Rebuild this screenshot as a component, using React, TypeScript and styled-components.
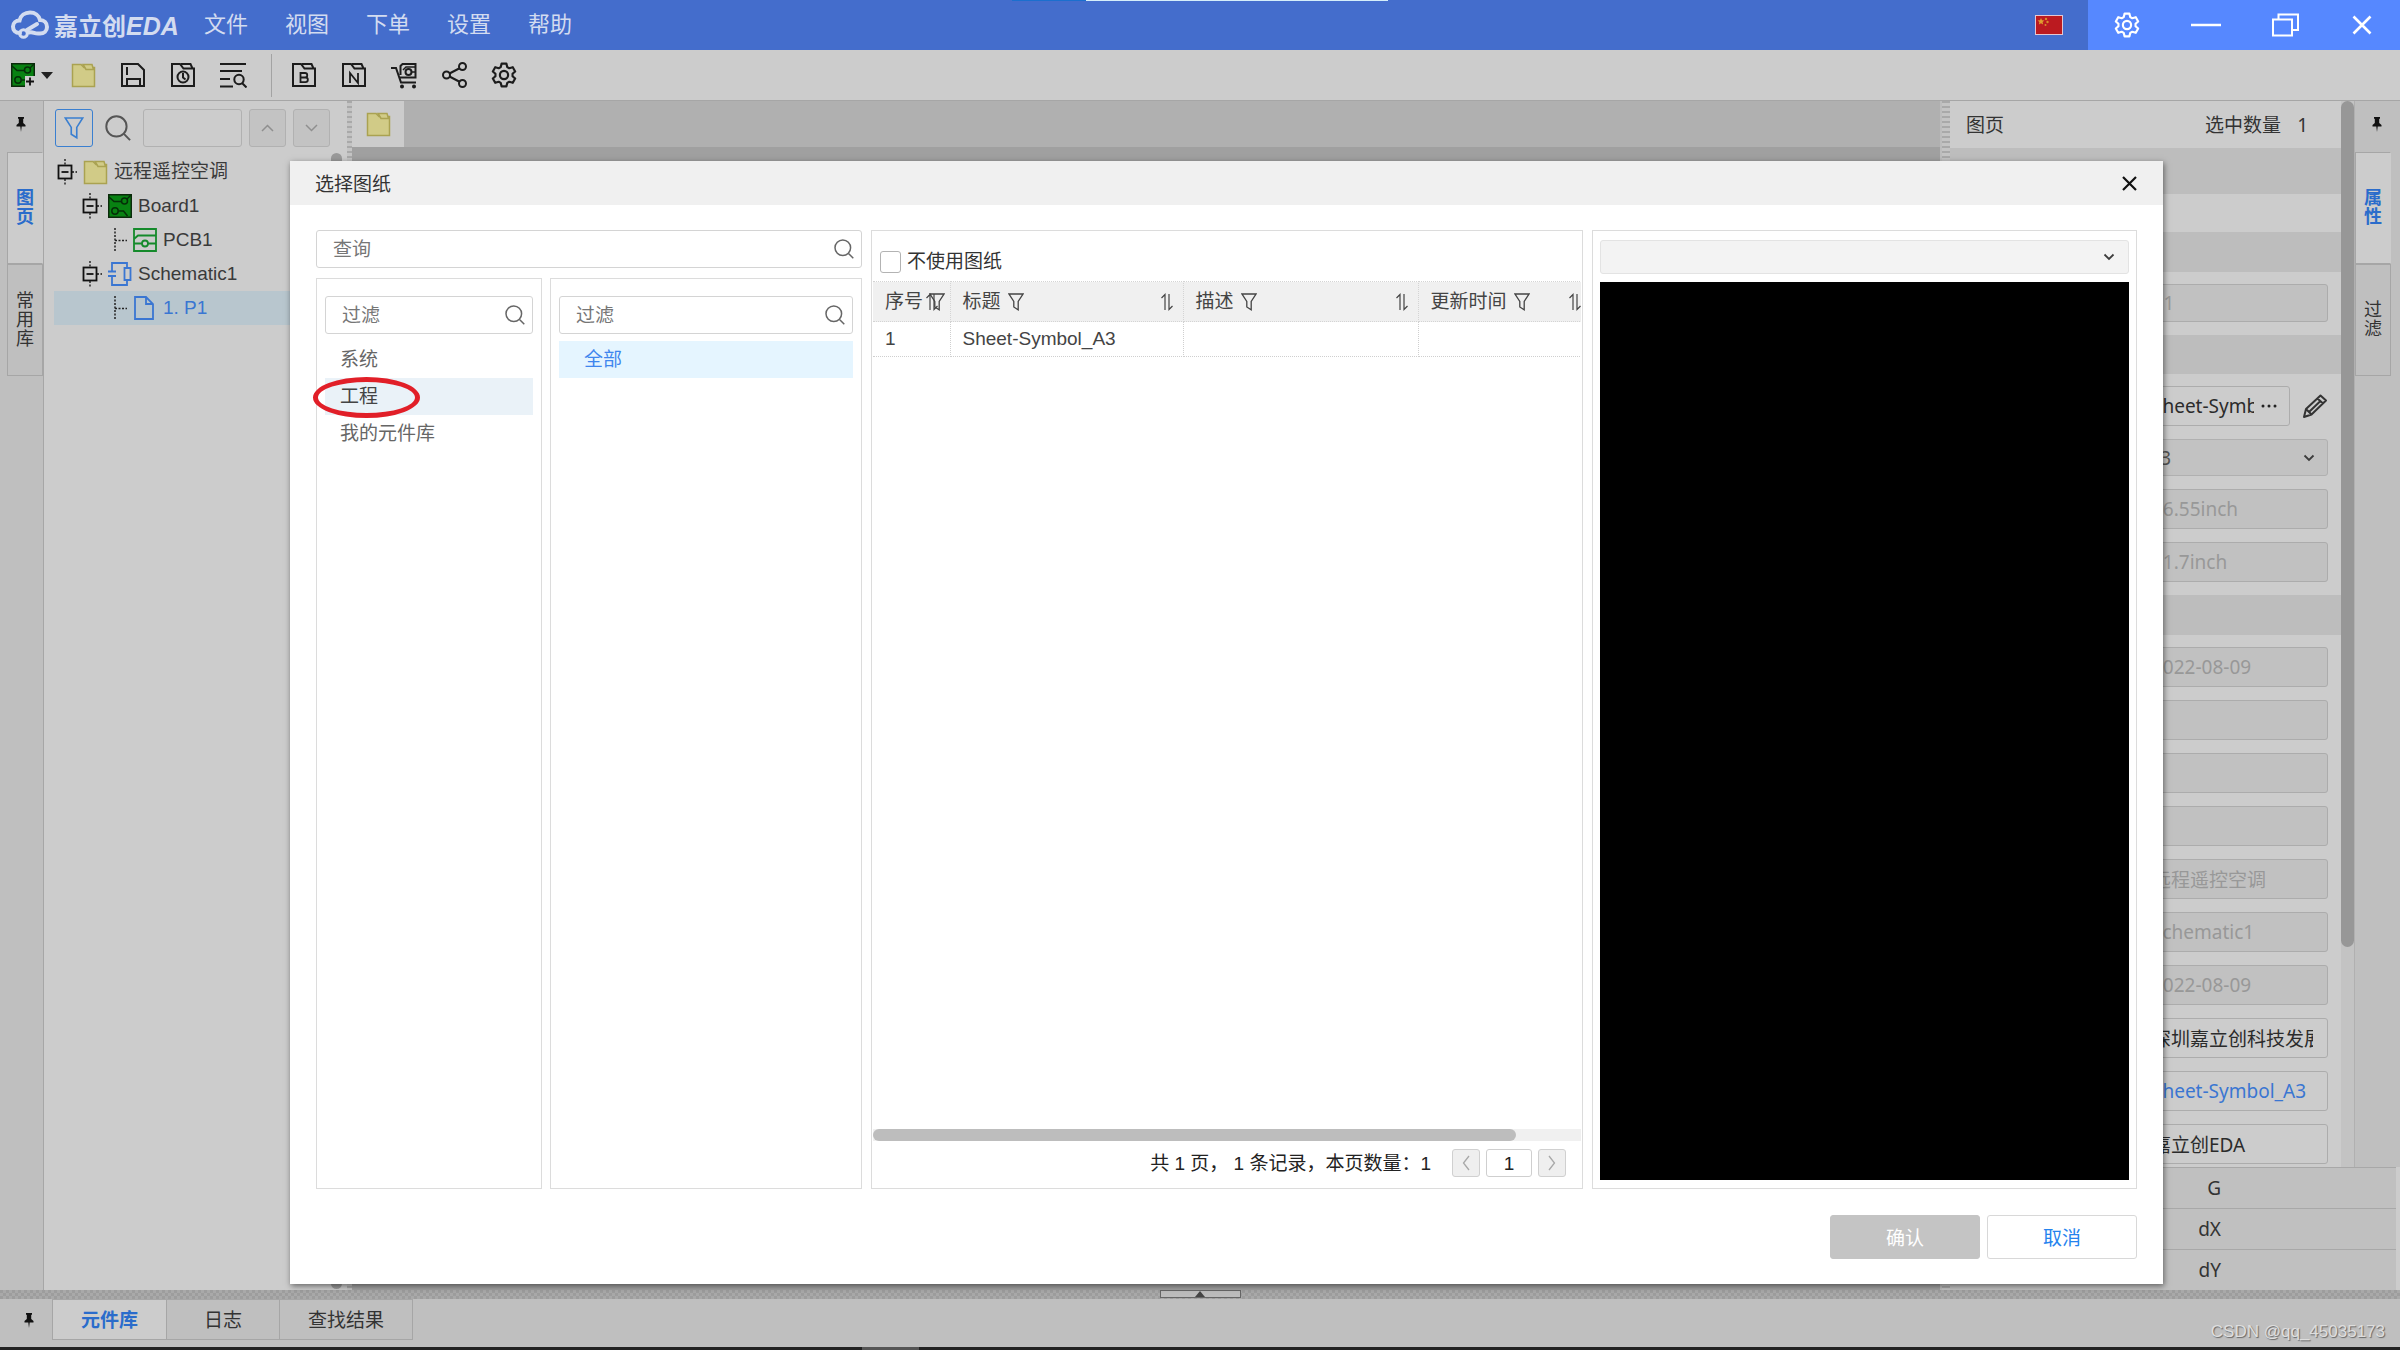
import React from "react";
import styled, { createGlobalStyle, css } from "styled-components";

const sans = `"Liberation Sans", "Noto Sans CJK SC", sans-serif`;
const ui = `"Noto Sans", "Noto Sans CJK SC", sans-serif`;

const c = {
  bar: "#446dcc",
  barBright: "#5688ff",
  base: "#cccccc",
  strip: "#bfbfbf",
  line: "#a6a6a6",
  ink: "#333333",
  blue: "#2a6ccb",
  paleBorder: "#dcdcdc",
};

const GlobalStyle = createGlobalStyle`
  *, *::before, *::after { box-sizing: border-box; }
  body { margin: 0; background: #222; color: ${c.ink}; font-family: ${sans}; font-size: 19px; line-height: 24px; }
  button, input, select { font: inherit; color: inherit; margin: 0; }
  button { padding: 0; border: 0; background: none; }
  input, select { min-width: 0; }
  svg { display: block; flex: none; }
`;

const Screen = styled.div`
  height: 100vh;
  display: flex;
  flex-direction: column;
  overflow: hidden;
  position: relative;
  background: ${c.base};
`;

/* Title bar */
const TitleBar = styled.header`
  flex: none;
  height: 50px;
  display: flex;
  align-items: stretch;
  background: ${c.bar};
  color: #d3dcf0;
`;
const TopHint = styled.div`
  position: absolute;
  top: 0;
  left: 1012px;
  width: 376px;
  height: 1px;
  background: linear-gradient(90deg, #1b6fce 74px, #d5eefa 74px);
`;
const Brand = styled.div`
  display: flex;
  align-items: center;
  gap: 4px;
  padding-left: 10px;
  width: 182px;
  font-size: 24px;
  font-weight: 700;
  white-space: nowrap;
  em { font-family: "Liberation Sans", sans-serif; font-size: 25px; }
`;
const BrandText = styled.span`
  font-family: "Noto Sans CJK SC", sans-serif;
`;
const Menu = styled.nav`
  display: flex;
  align-items: center;
  gap: 37px;
  padding-left: 22px;
  flex: 1;
  button { font-size: 22px; line-height: 30px; }
`;
const Flag = styled.div`
  display: flex;
  align-items: center;
  padding-right: 25px;
`;
const WindowControls = styled.div`
  display: flex;
  align-items: center;
  gap: 51px;
  width: 13%;
  padding-left: 26px;
  background: ${c.barBright};
  color: #fff;
`;

/* Tool bar */
const ToolBar = styled.div`
  flex: none;
  height: 51px;
  display: flex;
  align-items: center;
  gap: 24px;
  padding-left: 11px;
  border-bottom: 1px solid ${c.line};
  color: #1c1c1c;
`;
const BoardTool = styled.button`
  display: flex;
  align-items: center;
  gap: 6px;
  width: 36px;
`;
const ToolDivider = styled.span`
  align-self: stretch;
  width: 1px;
  margin: 4px -5px 3px 0;
  background: #a3a3a3;
`;

/* Work area */
const Work = styled.main`
  flex: 1;
  min-height: 0;
  display: flex;
`;
const Strip = styled.aside<{ $side: "left" | "right" }>`
  flex: none;
  width: ${(p) => (p.$side === "left" ? 44 : 46)}px;
  display: flex;
  flex-direction: column;
  align-items: stretch;
  background: ${c.strip};
  ${(p) =>
    p.$side === "left"
      ? css`border-right: 1px solid ${c.line}; padding-left: 7px;`
      : css`border-left: 1px solid #b0b0b0; padding-right: 9px;`}
`;
const PinButton = styled.button<{ $wide?: boolean }>`
  height: ${(p) => (p.$wide ? "auto" : "51px")};
  width: ${(p) => (p.$wide ? "52px" : "auto")};
  display: flex;
  align-items: center;
  justify-content: center;
  padding: ${(p) => (p.$wide ? "2px 0 0 6px" : "0 8px 4px 0")};
`;
const RightPin = styled(PinButton)`
  padding: 0 0 4px 8px;
`;
const SideTab = styled.button<{ $active?: boolean }>`
  height: 112px;
  width: 100%;
  display: flex;
  align-items: center;
  justify-content: center;
  border: 1px solid ${c.line};
  border-right-color: ${(p) => (p.$active ? c.base : c.line)};
  background: ${(p) => (p.$active ? c.base : c.strip)};
  color: ${(p) => (p.$active ? c.blue : c.ink)};
  font-weight: ${(p) => (p.$active ? 700 : 400)};
  font-size: 18px;
  line-height: 19px;
  span { width: 18px; }
`;

const TreePanel = styled.section`
  flex: none;
  width: 303px;
  display: flex;
  flex-direction: column;
  background: ${c.base};
`;
const TreeTools = styled.div`
  display: flex;
  align-items: center;
  padding: 8px 16px 0 11px;
  gap: 7px;
`;
const TreeBody = styled.div`
  flex: 1;
  display: flex;
  padding: 6px 5px 1px 10px;
`;
const TreeThumb = styled.div`
  flex: none;
  width: 11px;
  margin-left: -11px;
  border-radius: 6px;
  background: #999;
`;
const box = css`
  height: 38px;
  border: 1px solid #b1b1b1;
  border-radius: 3px;
  display: flex;
  align-items: center;
  justify-content: center;
`;
const FilterButton = styled.button`
  ${box}
  width: 38px;
  border-color: #3a7fd0;
  color: #3a7fd0;
`;
const FindButton = styled.button`
  width: 36px;
  display: flex;
  justify-content: center;
  color: #555;
`;
const FindInput = styled.input`
  ${box}
  width: 99px;
  background: transparent;
`;
const StepButton = styled.button`
  ${box}
  width: 37px;
  background: #c3c3c3;
  color: #8f8f8f;
`;
const Tree = styled.ul`
  list-style: none;
  flex: 1;
  margin: 0;
  padding: 2px 0 0;
`;
const TreeRow = styled.li<{ $level: number; $selected?: boolean }>`
  height: 34px;
  display: flex;
  align-items: center;
  gap: 6px;
  padding-left: ${(p) => 3 + p.$level * 25}px;
  white-space: nowrap;
  background: ${(p) => (p.$selected ? "#b8c6ce" : "transparent")};
  color: ${(p) => (p.$selected ? "#3a76d2" : "#3a3a3a")};
`;

const Gutter = styled.div`
  flex: none;
  width: 5px;
  background: repeating-linear-gradient(180deg, #a9a9a9 0 2px, #c4c4c4 2px 5px);
`;
const WideGutter = styled(Gutter)`
  width: 10px;
  border-left: 2px solid #bdbdbd;
`;
const Canvas = styled.section`
  flex: 1;
  background: #a0a0a0;
`;
const CanvasTabs = styled.div`
  height: 46px;
  background: #b0b0b0;
`;
const CanvasTab = styled.button`
  height: 46px;
  width: 52px;
  display: flex;
  align-items: center;
  justify-content: center;
  background: ${c.base};
`;

/* Properties */
const Props = styled.section`
  flex: none;
  width: 450px;
  display: flex;
  flex-direction: column;
`;
const PropsTop = styled.div`
  flex: 1;
  min-height: 0;
  display: flex;
`;
const PropsMain = styled.div`
  flex: 1;
  min-width: 0;
  font-family: ${ui};
`;
const PropsHead = styled.div`
  height: 47px;
  display: flex;
  align-items: center;
  padding: 0 33px 0 16px;
  gap: 16px;
  span:first-child { flex: 1; }
`;
const Band = styled.div<{ $h: number; $plain?: boolean }>`
  height: ${(p) => p.$h}px;
  background: ${(p) => (p.$plain ? c.base : "#bdbdbd")};
`;
const Fields = styled.div`
  display: flex;
  flex-direction: column;
  gap: 13px;
  padding: 12px 13px 13px 190px;
`;
const field = css`
  height: 40px;
  width: 100%;
  min-width: 0;
  border: 1px solid #acacac;
  border-radius: 3px;
  padding: 0 14px 0 11px;
`;
const Field = styled.input<{ $short?: boolean; $tone?: string }>`
  ${field}
  height: ${(p) => (p.$short ? 38 : 40)}px;
  background: ${c.base};
  color: ${(p) => p.$tone || "#2b2b2b"};
  &:disabled { background: #c1c1c1; color: #989898; }
`;
const FieldRow = styled.div`
  display: flex;
  align-items: center;
  gap: 12px;
`;
const PickBox = styled.div`
  ${field}
  display: flex;
  align-items: center;
  gap: 6px;
  padding-right: 11px;
  input { flex: 1; width: 0; border: 0; padding: 0; background: transparent; color: #2b2b2b; }
`;
const SelectWrap = styled.div<{ $light?: boolean }>`
  display: grid;
  align-items: center;
  color: #3c3c3c;
  > * { grid-area: 1 / 1; }
  > svg { justify-self: end; margin-right: ${(p) => (p.$light ? 14 : 13)}px; pointer-events: none; }
  select {
    appearance: none;
    width: 100%;
    height: ${(p) => (p.$light ? 34 : 37)}px;
    padding: 0 34px 0 7px;
    border: 1px solid ${(p) => (p.$light ? "#e3e3e3" : "#b0b0b0")};
    border-radius: 3px;
    background: ${(p) => (p.$light ? "#f3f3f3" : "#c2c2c2")};
    color: #555;
    opacity: 1;
  }
`;
const VTrack = styled.div`
  flex: none;
  width: 13px;
  background: #c3c3c3;
`;
const VThumb = styled.div`
  width: 13px;
  height: 79.4%;
  border-radius: 7px;
  background: #979797;
`;
const Coords = styled.dl`
  margin: 0;
  width: 446px;
  background: #c0c0c0;
  font-family: ${ui};
`;
const Coord = styled.div`
  height: 41px;
  display: flex;
  align-items: center;
  border-top: 1px solid #a8a8a8;
  dt { width: 271px; text-align: right; }
`;

/* Bottom bar */
const HSplit = styled.div`
  flex: none;
  height: 9px;
  display: flex;
  justify-content: center;
  background: repeating-conic-gradient(#a9a9a9 0 25%, #9d9d9d 0 50%) 0 0 / 6px 6px;
`;
const Collapse = styled.button`
  width: 81px;
  height: 8px;
  display: flex;
  align-items: center;
  justify-content: center;
  border: 1px solid #666;
  background: #bcbcbc;
  color: #444;
`;
const BottomBar = styled.footer`
  flex: none;
  height: 48px;
  display: flex;
  align-items: flex-start;
  background: ${c.strip};
`;
const BottomTabs = styled.div`
  display: flex;
  height: 41px;
`;
const BottomTab = styled.button<{ $active?: boolean }>`
  padding: 3px 28px 0;
  min-width: 113px;
  border: 1px solid ${c.line};
  border-left-width: ${(p) => (p.$active ? 1 : 0)}px;
  background: ${(p) => (p.$active ? c.base : c.strip)};
  color: ${(p) => (p.$active ? c.blue : c.ink)};
  font-weight: ${(p) => (p.$active ? 700 : 400)};
`;
const Credit = styled.span`
  margin: 21px 15px 0 auto;
  font-size: 17px;
  color: #dedede;
  text-shadow: 1px 1px 1px #666;
`;
const TaskEdge = styled.div`
  flex: none;
  height: 3px;
  background: linear-gradient(90deg, #222 862px, #555 862px 919px, #222 919px);
`;

/* Dialog */
const Dialog = styled.section`
  position: absolute;
  top: 161px;
  right: 237px;
  bottom: 66px;
  left: 290px;
  display: flex;
  flex-direction: column;
  background: #fff;
  box-shadow: 1px 2px 6px rgba(0, 0, 0, 0.5);
`;
const DialogHead = styled.header`
  flex: none;
  height: 44px;
  display: flex;
  align-items: center;
  justify-content: space-between;
  padding: 0 26px 0 25px;
  background: #f0f0f0;
  h1 { margin: 0; padding-top: 3px; font-size: 19px; font-weight: 400; }
`;
const DialogBody = styled.div`
  flex: 1;
  min-height: 0;
  display: grid;
  grid-template-columns: 546fr 712fr 545fr;
  gap: 9px;
  padding: 25px 26px 0;
`;
const Picker = styled.div`
  display: flex;
  flex-direction: column;
  gap: 10px;
`;
const PickerLists = styled.div`
  flex: 1;
  display: grid;
  grid-template-columns: 226fr 312fr;
  gap: 8px;
`;
const Panel = styled.div`
  border: 1px solid ${c.paleBorder};
  background: #fff;
  min-width: 0;
  min-height: 0;
`;
const ListPanel = styled(Panel)`
  padding: 17px 8px 0;
`;
const SearchBox = styled.div`
  height: 38px;
  display: flex;
  align-items: center;
  gap: 8px;
  padding: 0 7px 0 16px;
  border: 1px solid #d4d4d4;
  border-radius: 3px;
  background: #fff;
  color: #666;
  input { flex: 1; border: 0; padding: 1px 0 0; background: transparent; outline: 0; }
  input::placeholder { color: #767676; opacity: 1; }
`;
const Options = styled.ul`
  list-style: none;
  margin: 7px 0 0;
  padding: 0;
`;
const Option = styled.li<{ $tone?: "hover" | "active"; $pad?: number }>`
  position: relative;
  button {
    display: block;
    width: 100%;
    height: 37px;
    padding-left: ${(p) => p.$pad || 15}px;
    padding-top: 1px;
    text-align: left;
    color: ${(p) => (p.$tone === "active" ? "#3f86ee" : p.$tone ? "#444" : "#666")};
    background: ${(p) => (p.$tone === "active" ? "#e5f5ff" : p.$tone ? "#eaf2f8" : "transparent")};
  }
`;
const Ring = styled.span`
  position: absolute;
  left: -12px;
  top: -1px;
  width: 107px;
  height: 41px;
  border: 5px solid #e11f28;
  border-radius: 50%;
  pointer-events: none;
`;
const SheetPanel = styled(Panel)`
  display: flex;
  flex-direction: column;
  padding: 0 1px;
  overflow: hidden;
`;
const NoSheet = styled.label`
  flex: none;
  height: 50px;
  display: flex;
  align-items: center;
  gap: 6px;
  padding: 11px 0 0 7px;
  input {
    appearance: none;
    width: 21px;
    height: 22px;
    border: 1px solid #b3b3b3;
    border-radius: 3px;
    background: #fff;
  }
`;
const TableClip = styled.div`
  flex: 1;
  overflow: hidden;
`;
const SheetTable = styled.table`
  width: 780px;
  table-layout: fixed;
  border-collapse: collapse;
  th, td {
    padding: 0 12px;
    text-align: left;
    font-weight: 400;
    white-space: nowrap;
    border-right: 1px dotted #cfcfcf;
    border-bottom: 1px dotted #cfcfcf;
  }
  th { height: 40px; background: #f0f0f0; border-color: #d4d4d4; border-top: 1px dotted #d4d4d4; }
  td { height: 35px; color: #444; }
`;
const HeadCell = styled.div<{ $tight?: boolean }>`
  display: flex;
  align-items: center;
  gap: ${(p) => (p.$tight ? 6 : 7)}px;
  padding-top: 1px;
  color: #444;
  svg:last-child { margin-left: ${(p) => (p.$tight ? "-26px" : "auto")}; margin-right: -3px; }
`;
const HTrack = styled.div`
  flex: none;
  height: 12px;
  background: #f0f0f0;
`;
const HThumb = styled.div`
  width: 90.8%;
  height: 12px;
  border-radius: 6px;
  background: #bdbdbd;
`;
const Pager = styled.div`
  flex: none;
  height: 47px;
  display: flex;
  align-items: center;
  justify-content: flex-end;
  gap: 6px;
  padding: 0 15px 3px 0;
  > span { margin-right: 15px; padding-top: 2px; white-space: pre; color: #222; }
  input { width: 46px; height: 28px; border: 1px solid #cfcfcf; border-radius: 3px; text-align: center; padding: 1px 0 0; color: #222; }
`;
const PageButton = styled.button`
  width: 28px;
  height: 28px;
  display: flex;
  align-items: center;
  justify-content: center;
  border: 1px solid #d0d0d0;
  border-radius: 3px;
  background: #efefef;
  color: #a8a8a8;
`;
const PreviewPanel = styled(Panel)`
  display: flex;
  flex-direction: column;
  gap: 8px;
  padding: 9px 7px 8px;
`;
const Preview = styled.div`
  flex: 1;
  background: #000;
`;
const DialogFoot = styled.footer`
  flex: none;
  display: flex;
  justify-content: flex-end;
  gap: 7px;
  padding: 26px 26px 25px;
`;
const Action = styled.button<{ $muted?: boolean }>`
  width: 150px;
  height: 44px;
  padding-top: 3px;
  border: 1px solid ${(p) => (p.$muted ? "#c4c4c4" : "#d8d8d8")};
  border-radius: 3px;
  background: ${(p) => (p.$muted ? "#c4c4c4" : "#fff")};
  color: ${(p) => (p.$muted ? "#fff" : "#2583ee")};
`;

/* Icons */
type IconProps = { w?: number; h?: number; box?: string; sw?: number; children: React.ReactNode };
const Icon = ({ w = 24, h = 24, box: vb, sw = 2, children }: IconProps) => (
  <svg width={w} height={h} viewBox={vb || `0 0 ${w} ${h}`} fill="none" stroke="currentColor" strokeWidth={sw} aria-hidden="true">
    {children}
  </svg>
);
const Cloud = () => (
  <Icon w={40} h={30} sw={4}>
    <path d="M10 23C5 23 3 20 3 16.500C3 13 6 10.500 9.500 10.500C10.500 5.500 15 2.500 20 2.500C25 2.500 29 5.500 30 10C34 10 37 13 37 17C37 21 34 23.500 30 23.500H28C24 23.500 23 21.500 19 22.500" strokeLinecap="round" />
    <path d="M17 20L27 14" strokeLinecap="round" />
    <circle cx="13.500" cy="23.500" r="3.800" strokeWidth="3" />
  </Icon>
);
const FlagIcon = () => (
  <svg width="28" height="20" viewBox="0 0 28 20" aria-hidden="true">
    <rect width="28" height="20" fill="#e3c7d2" />
    <rect x="1" y="1" width="26" height="18" fill="#bb1a20" />
    <path d="M6 3l1 2.200 2.400.3-1.800 1.600.5 2.400L6 8.300 3.900 9.500l.5-2.400L2.600 5.500 5 5.200z" fill="#e0a030" />
    <circle cx="11" cy="4" r="1.200" fill="#d88a2c" /><circle cx="12.500" cy="7" r="1.200" fill="#d88a2c" /><circle cx="10.500" cy="10" r="1" fill="#d88a2c" />
  </svg>
);
const gearPath =
  "M9.800 1.500h4.400l.8 3.200 1.900 1.100 3.200-1 2.200 3.900-2.400 2.200v2.200l2.400 2.200-2.200 3.900-3.200-1-1.900 1.100-.8 3.200H9.800L9 19.300l-1.900-1.100-3.200 1-2.200-3.900 2.400-2.200v-2.200L1.700 8.700l2.200-3.900 3.200 1L9 4.700z";
const Gear = ({ size = 25 }: { size?: number }) => (
  <Icon w={size} h={size} box="0 0 24 24">
    <path d={gearPath} strokeLinejoin="round" />
    <circle cx="12" cy="12" r="3.800" />
  </Icon>
);
const Folder = () => (
  <svg width="25" height="25" viewBox="0 0 25 25" aria-hidden="true">
    <path d="M1.500 1.500H10L13 4.500H23.500V23.500H1.500Z" fill="#d1cb87" stroke="#aaa251" strokeWidth="1.500" />
    <path d="M12 1.500h9l1.500 5H15z" fill="#d1cb87" stroke="#aaa251" strokeWidth="1.500" />
  </svg>
);
const FolderFrame = ({ children }: { children: React.ReactNode }) => (
  <Icon w={26} h={26}>
    <path d="M2 2H10L13.500 6.500H24V24H2Z" />
    <path d="M11 2h9.500l2 4.500" />
    {children}
  </Icon>
);
const BoardArt = ({ plus }: { plus?: boolean }) => (
  <svg width="24" height="24" viewBox="0 0 24 24" fill="none" aria-hidden="true">
    <rect x="0.750" y="0.750" width="22.500" height="22.500" fill="#088212" stroke="#0b2a0b" strokeWidth="1.500" />
    <g stroke="#052f08" strokeWidth="1.500">
      <path d="M1 3l5 4.500h7.500" /><circle cx="16.500" cy="7" r="3" /><path d="M19 5l4-4" />
      <circle cx="7" cy="17" r="3.200" /><path d="M10.500 17h5l4 5" />
    </g>
    {plus && <><path d="M14 24V13h11v11z" fill="#ccc" /><path d="M19 14.500v8M15 18.500h8" stroke="#111" strokeWidth="1.800" /></>}
  </svg>
);
const PcbArt = () => (
  <Icon w={24} h={24} sw={1.8}>
    <g stroke="#158a2b"><path d="M1 1h22v22H1zM1 11l4-3.500h18M1 15.500h8M15 15.500h8" /><circle cx="12" cy="15.500" r="3" /></g>
  </Icon>
);
const SchematicArt = () => (
  <Icon w={24} h={24} sw={1.8}>
    <g stroke="#3a76d2"><path d="M4 9V1h15v5M4 14v9h15v-5M0 9.500h8M0 14h8" /><path d="M16.500 6h6v12h-6z" /></g>
  </Icon>
);
const PageArt = () => (
  <Icon w={24} h={24} sw={1.8}><path d="M2 1h11l7 7v15H2zM13 1v7h7" /></Icon>
);
const Toggle = () => (
  <svg width="20" height="26" viewBox="0 0 20 26" fill="none" stroke="#111" aria-hidden="true">
    <path d="M8 0v6M8 20v6M15 13h5" strokeDasharray="2 1.500" strokeWidth="1.300" />
    <rect x="1.500" y="6.500" width="13" height="13" strokeWidth="1.800" />
    <path d="M4.500 13h7" strokeWidth="1.800" />
  </svg>
);
const Branch = () => (
  <svg width="13" height="26" viewBox="0 0 13 26" fill="none" stroke="#222" strokeDasharray="2 1.500" aria-hidden="true">
    <path d="M1 1v24M1 13.500h12" strokeWidth="1.500" />
  </svg>
);
const Pin = () => (
  <svg width="10" height="15" viewBox="0 0 10 15" fill="#111" aria-hidden="true">
    <path d="M2 0h6v1.500L7.200 2v4L9.500 8v1.500H5.700L5 15l-.7-5.500H.5V8l2.300-2V2L2 1.500z" />
  </svg>
);
const Search = ({ size = 20 }: { size?: number }) => (
  <Icon w={size} h={size} box="0 0 20 20" sw={1.5}>
    <circle cx="8.800" cy="8.800" r="7.800" /><path d="M14.500 14.500L19.300 19.300" />
  </Icon>
);
const Funnel = ({ w = 16, h = 18 }: { w?: number; h?: number }) => (
  <Icon w={w} h={h} box="0 0 16 18" sw={1.3}><path d="M1 1h14l-4.800 7.500V16.800L5.800 14V8.500z" /></Icon>
);
const Sort = () => (
  <Icon w={14} h={18} sw={1.2}><path d="M1.500 5L5 1.500V17M9 1v15.500L12.500 13" /></Icon>
);
const Chevron = ({ d, w = 12, h = 8, sw = 1.8 }: { d: string; w?: number; h?: number; sw?: number }) => (
  <Icon w={w} h={h} sw={sw}><path d={d} /></Icon>
);
const down = "M1.500 1.500L6 6l4.500-4.500";

type TreeItem = { level: number; label: string; art: React.ReactNode; leaf?: boolean; selected?: boolean };
const tree: TreeItem[] = [
  { level: 0, label: "远程遥控空调", art: <Folder /> },
  { level: 1, label: "Board1", art: <BoardArt /> },
  { level: 2, label: "PCB1", art: <PcbArt />, leaf: true },
  { level: 1, label: "Schematic1", art: <SchematicArt /> },
  { level: 2, label: "1. P1", art: <PageArt />, leaf: true, selected: true },
];

const details: { name: string; value: string; locked?: boolean; tone?: string }[] = [
  { name: "更新日期", value: "2022-08-09", locked: true },
  { name: "更新时间", value: "", locked: true },
  { name: "创建时间", value: "", locked: true },
  { name: "料号", value: "", locked: true },
  { name: "工程", value: "远程遥控空调", locked: true },
  { name: "原理图", value: "Schematic1", locked: true },
  { name: "创建日期", value: "2022-08-09", locked: true },
  { name: "公司", value: "深圳嘉立创科技发展集团" },
  { name: "图纸符号", value: "Sheet-Symbol_A3", tone: "#3a76d2" },
  { name: "软件", value: "嘉立创EDA" },
];

const SearchField = ({ label }: { label: string }) => (
  <SearchBox>
    <input type="text" placeholder={label} aria-label={label} />
    <Search />
  </SearchBox>
);

export default function App() {
  return (
    <Screen>
      <GlobalStyle />
      <TitleBar>
        <Brand><Cloud /><BrandText>嘉立创<em>EDA</em></BrandText></Brand>
        <Menu>
          {["文件", "视图", "下单", "设置", "帮助"].map((m) => <button key={m}>{m}</button>)}
        </Menu>
        <Flag><FlagIcon /></Flag>
        <WindowControls>
          <button aria-label="设置"><Gear size={26} /></button>
          <button aria-label="最小化"><Icon w={30} h={26}><path d="M0 13h30" strokeWidth="2.500" /></Icon></button>
          <button aria-label="还原"><Icon w={27} h={24}><path d="M1 6.500h19v16H1zM6.500 6V1.500H26V17h-5.500" /></Icon></button>
          <button aria-label="关闭"><Icon w={24} h={20} sw={2.6}><path d="M3.500 1.500l17 17M20.500 1.500l-17 17" /></Icon></button>
        </WindowControls>
      </TitleBar>
      <TopHint />

      <ToolBar>
        <BoardTool aria-label="新建">
          <BoardArt plus />
          <svg width="12" height="7" viewBox="0 0 12 7" aria-hidden="true"><path d="M0 0h12L6 7z" fill="#222" /></svg>
        </BoardTool>
        <button aria-label="打开"><Folder /></button>
        <button aria-label="保存">
          <Icon w={26} h={26}><path d="M2 2h16l6 6v16H2zM7 5v8M7 24v-7h13v7" /></Icon>
        </button>
        <button aria-label="历史">
          <FolderFrame><circle cx="13" cy="15" r="5.500" /><path d="M13 11v4.500l2.500 2" /></FolderFrame>
        </button>
        <button aria-label="查找">
          <Icon w={27} h={26}><path d="M0 2h26M0 9h22M0 17h10M0 24.500h13" /><circle cx="19" cy="17.500" r="4.700" /><path d="M22 21l4.500 4.500" /></Icon>
        </button>
        <ToolDivider />
        <button aria-label="物料清单">
          <FolderFrame><path d="M9.500 11h4.500a2.200 2.200 0 0 1 0 4.500h-4.500zM9.500 15.500h5a2.300 2.300 0 0 1 0 4.700h-5z" strokeWidth="1.800" /></FolderFrame>
        </button>
        <button aria-label="网表">
          <FolderFrame><path d="M9 21V11l8 10V11" strokeWidth="1.800" /></FolderFrame>
        </button>
        <button aria-label="下单">
          <Icon w={27} h={27}><path d="M0 6h5l5 14.500h15M8.500 15.500h16V2h-13l-2 2v9" /><circle cx="17.500" cy="10" r="3" /><path d="M12 8l3-3h9M20 10h4" strokeWidth="1.500" /><circle cx="11" cy="24.500" r="1" /><circle cx="23" cy="24.500" r="1" /></Icon>
        </button>
        <button aria-label="分享">
          <Icon w={25} h={26}><circle cx="4.500" cy="13" r="3.500" /><circle cx="20.500" cy="4.500" r="3.500" /><circle cx="20.500" cy="21.500" r="3.500" /><path d="M7.500 11.500L18 6M7.500 14.500L18 20" /></Icon>
        </button>
        <button aria-label="设置"><Gear size={26} /></button>
      </ToolBar>

      <Work>
        <Strip $side="left">
          <PinButton aria-label="固定"><Pin /></PinButton>
          <SideTab $active><span>图页</span></SideTab>
          <SideTab><span>常用库</span></SideTab>
        </Strip>
        <TreePanel>
          <TreeTools>
            <FilterButton aria-label="过滤"><Funnel w={20} h={24} /></FilterButton>
            <FindButton aria-label="查找"><Search size={26} /></FindButton>
            <FindInput type="text" aria-label="查找内容" />
            <StepButton aria-label="上一个"><Chevron w={13} h={8} sw={1.5} d="M1 7l5.500-5.500L12 7" /></StepButton>
            <StepButton aria-label="下一个"><Chevron w={13} h={8} sw={1.5} d="M1 1l5.500 5.500L12 1" /></StepButton>
          </TreeTools>
          <TreeBody>
            <Tree>
              {tree.map((t) => (
                <TreeRow key={t.label} $level={t.leaf ? t.level + 0.28 : t.level} $selected={t.selected}>
                  {t.leaf ? <Branch /> : <Toggle />}
                  {t.art}
                  {t.label}
                </TreeRow>
              ))}
            </Tree>
            <TreeThumb />
          </TreeBody>
        </TreePanel>
        <Gutter />
        <Canvas>
          <CanvasTabs><CanvasTab aria-label="工程"><Folder /></CanvasTab></CanvasTabs>
        </Canvas>
        <WideGutter />
        <Props>
          <PropsTop>
            <PropsMain>
              <PropsHead><span>图页</span><span>选中数量</span><span>1</span></PropsHead>
              <Band $h={46} />
              <Band $h={38} $plain />
              <Band $h={40} />
              <Fields><Field $short disabled aria-label="名称" defaultValue="P1" /></Fields>
              <Band $h={39} />
              <Fields>
                <FieldRow>
                  <PickBox>
                    <input type="text" aria-label="图纸" defaultValue="Sheet-Symbol_A3" />
                    <button aria-label="选择图纸">
                      <svg width="18" height="4" viewBox="0 0 18 4" fill="#222" aria-hidden="true"><circle cx="3" cy="2" r="1.500" /><circle cx="9" cy="2" r="1.500" /><circle cx="15" cy="2" r="1.500" /></svg>
                    </button>
                  </PickBox>
                  <button aria-label="编辑">
                    <Icon w={26} h={26} sw={2}><path d="M2 24l2-8L18.500 2.500l5.500 5L9.500 21.500zM4 16l5.500 5.500M15.500 5.500l5.500 5M7.500 18.500L19 7.500" strokeLinejoin="round" /></Icon>
                  </button>
                </FieldRow>
                <SelectWrap>
                  <select aria-label="尺寸" defaultValue="A3"><option>A3</option></select>
                  <Chevron d={down} />
                </SelectWrap>
                <Field disabled aria-label="宽" defaultValue="16.55inch" />
                <Field disabled aria-label="高" defaultValue="11.7inch" />
              </Fields>
              <Band $h={40} />
              <Fields>
                {details.map((d) => (
                  <Field key={d.name} aria-label={d.name} disabled={d.locked} defaultValue={d.value} $tone={d.tone} />
                ))}
              </Fields>
            </PropsMain>
            <VTrack><VThumb /></VTrack>
            <Strip $side="right">
              <RightPin aria-label="固定"><Pin /></RightPin>
              <SideTab $active><span>属性</span></SideTab>
              <SideTab><span>过滤</span></SideTab>
            </Strip>
          </PropsTop>
          <Coords>
            {["G", "dX", "dY"].map((k) => <Coord key={k}><dt>{k}</dt></Coord>)}
          </Coords>
        </Props>
      </Work>

      <HSplit>
        <Collapse aria-label="展开">
          <svg width="10" height="6" viewBox="0 0 10 6" fill="#444" aria-hidden="true"><path d="M0 6L5 0l5 6z" /></svg>
        </Collapse>
      </HSplit>
      <BottomBar>
        <BottomTabs>
          <PinButton $wide aria-label="固定"><Pin /></PinButton>
          <BottomTab $active>元件库</BottomTab>
          <BottomTab>日志</BottomTab>
          <BottomTab>查找结果</BottomTab>
        </BottomTabs>
        <Credit>CSDN @qq_45035173</Credit>
      </BottomBar>
      <TaskEdge />

      <Dialog role="dialog" aria-labelledby="dialog-title">
        <DialogHead>
          <h1 id="dialog-title">选择图纸</h1>
          <button aria-label="关闭"><Icon w={15} h={15} sw={2.2}><path d="M1 1l13 13M14 1L1 14" stroke="#111" /></Icon></button>
        </DialogHead>
        <DialogBody>
          <Picker>
            <SearchField label="查询" />
            <PickerLists>
              <ListPanel>
                <SearchField label="过滤" />
                <Options>
                  <Option><button>系统</button></Option>
                  <Option $tone="hover"><button>工程</button><Ring /></Option>
                  <Option><button>我的元件库</button></Option>
                </Options>
              </ListPanel>
              <ListPanel>
                <SearchField label="过滤" />
                <Options>
                  <Option $tone="active" $pad={25}><button>全部</button></Option>
                </Options>
              </ListPanel>
            </PickerLists>
          </Picker>

          <SheetPanel>
            <NoSheet><input type="checkbox" />不使用图纸</NoSheet>
            <TableClip>
              <SheetTable>
                <colgroup><col width="77" /><col width="233" /><col width="235" /><col width="173" /><col width="62" /></colgroup>
                <thead>
                  <tr>
                    <th><HeadCell $tight>序号<Funnel /><Sort /></HeadCell></th>
                    <th><HeadCell>标题<Funnel /><Sort /></HeadCell></th>
                    <th><HeadCell>描述<Funnel /><Sort /></HeadCell></th>
                    <th><HeadCell>更新时间<Funnel /><Sort /></HeadCell></th>
                    <th />
                  </tr>
                </thead>
                <tbody>
                  <tr><td>1</td><td>Sheet-Symbol_A3</td><td /><td /><td /></tr>
                </tbody>
              </SheetTable>
            </TableClip>
            <HTrack><HThumb /></HTrack>
            <Pager>
              <span>共 1 页， 1 条记录，本页数量：1</span>
              <PageButton aria-label="上一页"><Chevron w={8} h={16} sw={1.3} d="M7 1L1.500 8 7 15" /></PageButton>
              <input type="text" aria-label="页码" defaultValue="1" />
              <PageButton aria-label="下一页"><Chevron w={8} h={16} sw={1.3} d="M1 1l5.500 7L1 15" /></PageButton>
            </Pager>
          </SheetPanel>

          <PreviewPanel>
            <SelectWrap $light>
              <select aria-label="预览"><option /></select>
              <Chevron d={down} />
            </SelectWrap>
            <Preview />
          </PreviewPanel>
        </DialogBody>
        <DialogFoot>
          <Action $muted>确认</Action>
          <Action>取消</Action>
        </DialogFoot>
      </Dialog>
    </Screen>
  );
}
